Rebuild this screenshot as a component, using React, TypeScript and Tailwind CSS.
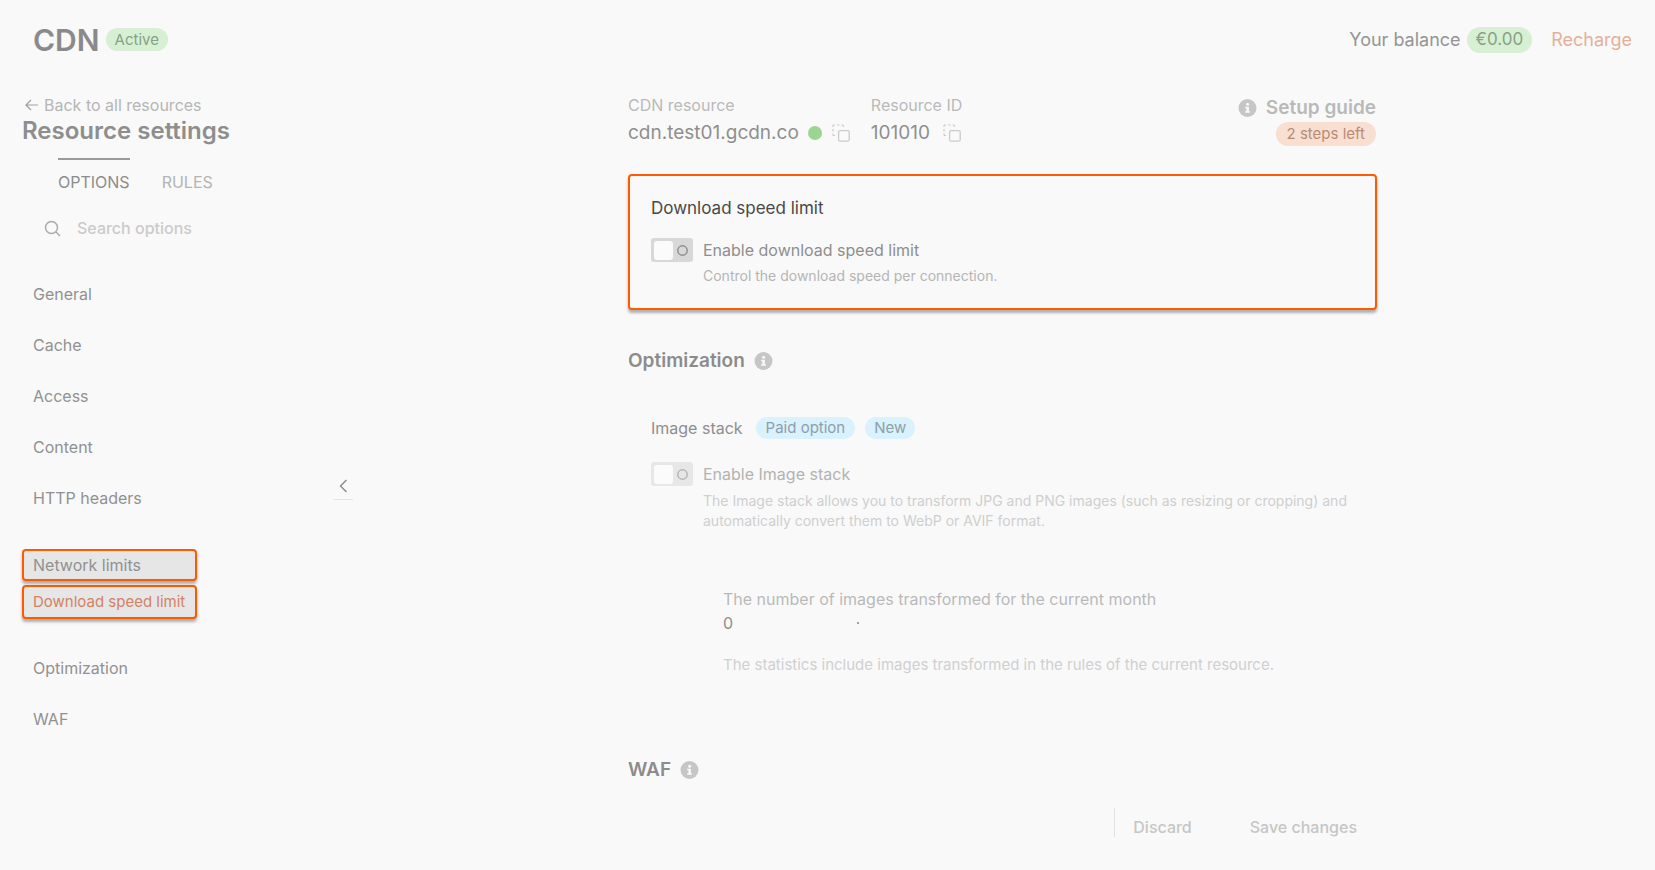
import { useState } from "react";

const topSections = ["General", "Cache", "Access", "Content", "HTTP headers"];
const bottomSections = ["Optimization", "WAF"];

function InfoIcon() {
	return (
		<svg width="19" height="19" viewBox="0 0 19 19" className="shrink-0" aria-hidden="true">
			<circle cx="9.5" cy="9" r="9" fill="#c6c6c6" />
			<circle cx="9.6" cy="5.2" r="1.5" fill="#f9f9f9" />
			<path d="M7.2 7.7h3.7v4.6h1v1.5H7.1v-1.5h1.3V9.2H7.2z" fill="#f9f9f9" />
		</svg>
	);
}

function CopyButton({ label }: { label: string }) {
	return (
		<button type="button" aria-label={label}>
			<svg width="18" height="18" viewBox="0 0 18 18" fill="none" stroke="#cbcbcb">
				<rect x="6.6" y="6.6" width="10.6" height="10.6" rx="1.5" strokeWidth="1.3" />
				<path
					d="M1 3V2a1 1 0 0 1 1-1h1M5 1h2.5M9.5 1h1a1 1 0 0 1 1 1v1M1 5v2.5M1 9.5v1a1 1 0 0 0 1 1h1"
					strokeWidth="1.2"
				/>
			</svg>
		</button>
	);
}

function Toggle({ id, disabled }: { id: string; disabled?: boolean }) {
	const [on, setOn] = useState(false);
	return (
		<span
			className={`relative flex h-6 w-[42px] shrink-0 items-center gap-1 rounded-[3px] px-[3px] ${
				disabled ? "bg-[#e7e7e7]" : "bg-[#d8d8d8]"
			} ${on ? "flex-row-reverse" : ""}`}>
			<input
				id={id}
				type="checkbox"
				role="switch"
				disabled={disabled}
				checked={on}
				onChange={() => setOn(!on)}
				className="absolute inset-0 m-0 h-full w-full opacity-0"
			/>
			<span className="h-[19px] w-[19px] shrink-0 rounded-[3px] bg-[#fbfbfb]" />
			<svg
				width="11"
				height="11"
				viewBox="0 0 11 11"
				fill="none"
				strokeWidth="1.5"
				className={disabled ? "stroke-[#b5b5b5]" : "stroke-[#8e8e8e]"}>
				<circle cx="5.5" cy="5.5" r="4.7" />
			</svg>
		</span>
	);
}

function NavLink({ name }: { name: string }) {
	return (
		<li className="flex h-[51px] items-center pl-[11px]">
			<a href="#">{name}</a>
		</li>
	);
}

function Sidebar() {
	return (
		<aside className="flex w-[350px] shrink-0 items-start justify-between pt-[15px] pl-[22px]">
			<div>
				<a href="#" className="flex items-center gap-[6px] pl-[2px] text-[16px] leading-6 text-[#b5b5b5]">
					<svg width="14" height="14" viewBox="0 0 14 14" fill="none" stroke="#a0a0a0" strokeWidth="1.2">
						<path d="M14 7H2M7 2L2 7l5 5" />
					</svg>
					Back to all resources
				</a>
				<h2 className="text-[24px] leading-7 font-semibold text-[#8e8e8e]">Resource settings</h2>
				<div role="tablist" className="mt-[13px] flex gap-8 pl-9 text-[16px] leading-6">
					<button role="tab" aria-selected="true" className="border-t-2 border-[#9a9a9a] pt-[10px] text-[#8c8c8c]">
						OPTIONS
					</button>
					<button role="tab" aria-selected="false" className="border-t-2 border-transparent pt-[10px] text-[#b4b4b4]">
						RULES
					</button>
				</div>
				<label className="mt-[14px] flex h-10 items-center gap-4 pl-[22px]">
					<svg width="17" height="17" viewBox="0 0 17 17" fill="none" stroke="#a9a9a9" strokeWidth="1.5">
						<circle cx="7.5" cy="7.5" r="6" />
						<path d="M12 12l4 4" />
					</svg>
					<input
						type="text"
						aria-label="Search options"
						placeholder="Search options"
						className="w-[180px] text-[16px] font-medium outline-none placeholder:text-[#cbcbcb]"
					/>
				</label>
				<nav className="mt-5 text-[16px] text-[#919191]">
					<ul>
						{topSections.map((name) => (
							<NavLink key={name} name={name} />
						))}
					</ul>
					<div className="mt-[26px] mb-[23px] flex w-[175px] flex-col gap-1">
						<a
							href="#"
							className="flex h-8 items-center rounded-[4px] border-2 border-[#ff5a00] bg-[#e6e6e6] pl-[9px] shadow-[0_3px_3px_rgba(0,0,0,0.3)]">
							Network limits
						</a>
						<a
							href="#"
							className="flex h-[34px] items-center rounded-[4px] border-2 border-[#ff5a00] bg-[#e6e6e6] pl-[9px] text-[15px] text-[#d28264] shadow-[0_3px_3px_rgba(0,0,0,0.3)]">
							Download speed limit
						</a>
					</div>
					<ul>
						{bottomSections.map((name) => (
							<NavLink key={name} name={name} />
						))}
					</ul>
				</nav>
			</div>
			<button
				type="button"
				aria-label="Collapse sidebar"
				className="mt-[379px] -mr-[3px] flex h-7 w-[19px] items-center justify-center border-b border-[#e4e4e4]">
				<svg width="9" height="14" viewBox="0 0 9 14" fill="none" stroke="#858585" strokeWidth="1.3">
					<path d="M7.5 1L1.5 7l6 6" />
				</svg>
			</button>
		</aside>
	);
}

function Content() {
	return (
		<main className="min-w-0 flex-1">
			<div className="mx-auto max-w-[749px] pt-[15px]">
				<div className="flex justify-between">
					<div className="flex gap-[21px]">
						<div>
							<p className="text-[16px] leading-6 text-[#b9b9b9]">CDN resource</p>
							<div className="mt-[2px] flex items-center text-[19px] leading-7 text-[#8f8f8f]">
								cdn.test01.gcdn.co
								<span className="mr-[10px] ml-[9px] h-[14px] w-[14px] rounded-full bg-[#9bd690]" />
								<CopyButton label="Copy CDN resource" />
							</div>
						</div>
						<div>
							<p className="text-[16px] leading-6 text-[#b9b9b9]">Resource ID</p>
							<div className="mt-[2px] flex items-center gap-[13px] text-[19px] leading-7 text-[#8f8f8f]">
								101010
								<CopyButton label="Copy resource ID" />
							</div>
						</div>
					</div>
					<div className="flex flex-col items-end pt-px pr-px">
						<a href="#" className="flex items-center gap-[9px] text-[19px] leading-7 font-semibold text-[#b9b9b9]">
							<InfoIcon />
							Setup guide
						</a>
						<span className="flex h-6 items-center rounded-full bg-[#f8dfd1] px-[11px] pt-px text-[15px] text-[#b88b78]">
							2 steps left
						</span>
					</div>
				</div>

				<section className="mt-[27px] rounded-[4px] border-2 border-[#ff5a00] bg-[#f9f9f9] px-[21px] pt-5 pb-[22px] shadow-[0_3px_3px_rgba(0,0,0,0.3)]">
					<h3 className="text-[17px] leading-6 text-[#484848]">Download speed limit</h3>
					<div className="mt-[18px] flex items-center gap-[10px]">
						<Toggle id="speed-limit" />
						<label htmlFor="speed-limit" className="text-[16px] leading-6 text-[#8e8e8e]">
							Enable download speed limit
						</label>
					</div>
					<p className="mt-1 pl-[52px] text-[14px] leading-5 text-[#b5b5b5]">
						Control the download speed per connection.
					</p>
				</section>

				<h2 className="mt-[37px] flex items-center gap-[9px] text-[19px] leading-7 font-semibold text-[#8c8c8c]">
					Optimization
					<InfoIcon />
				</h2>
				<section className="mt-[41px] px-[23px]">
					<div className="flex items-center gap-[10px]">
						<h3 className="mr-[3px] text-[16px] leading-6 text-[#8e8e8e]">Image stack</h3>
						<span className="flex h-[22px] items-center rounded-full bg-[#d9f2fd] px-[10px] pt-px text-[15px] text-[#8ba0aa]">
							Paid option
						</span>
						<span className="flex h-[22px] items-center rounded-full bg-[#d9f2fd] px-[9px] pt-px text-[15px] text-[#8ba0aa]">
							New
						</span>
					</div>
					<div className="mt-[22px] flex items-center gap-[10px]">
						<Toggle id="image-stack" disabled />
						<label htmlFor="image-stack" className="text-[16px] leading-6 text-[#b3b3b3]">
							Enable Image stack
						</label>
					</div>
					<p className="mt-[5px] pl-[52px] text-[14px] leading-5 text-[#cfcfcf]">
						The Image stack allows you to transform JPG and PNG images (such as resizing or cropping) and
						automatically convert them to WebP or AVIF format.
					</p>
					<div className="mt-14 pl-[72px]">
						<p className="text-[16px] leading-6 text-[#b9b9b9]">
							The number of images transformed for the current month
						</p>
						<div className="flex items-center gap-[124px] text-[16px] leading-6 text-[#8e8e8e]">
							0
							<span className="h-[2px] w-[2px] bg-[#a0a0a0]" />
						</div>
						<p className="mt-5 text-[15px] leading-5 text-[#d0d0d0]">
							The statistics include images transformed in the rules of the current resource.
						</p>
					</div>
				</section>

				<h2 className="mt-[81px] flex items-center gap-[9px] text-[19px] leading-7 font-semibold text-[#8c8c8c]">
					WAF
					<InfoIcon />
				</h2>
				<div className="mt-6 flex justify-end pr-5 text-[16px] leading-6 font-medium text-[#c6c6c6]">
					<div className="h-[29px] border-l border-[#e2e2e2] pt-[7px] pl-[18px]">
						<button type="button">Discard</button>
					</div>
					<button type="button" className="ml-[58px] pt-[7px]">
						Save changes
					</button>
				</div>
			</div>
		</main>
	);
}

export default function App() {
	return (
		<div className="min-h-screen bg-[#f9f9f9] font-['Inter',sans-serif]">
			<header className="flex h-[78px] items-center justify-between pt-px pr-[23px] pl-[33px]">
				<div className="flex items-center gap-[6px]">
					<h1 className="text-[30px] leading-9 font-semibold text-[#8a8a8a]">CDN</h1>
					<span className="flex h-[23px] items-center rounded-full bg-[#d7f0d3] px-[9px] pt-px text-[15px] text-[#88a186]">
						Active
					</span>
				</div>
				<div className="flex items-center text-[18px] text-[#959595]">
					Your balance
					<span className="ml-[6px] flex h-[26px] items-center rounded-full bg-[#d7f0d3] px-[9px] pt-px text-[17px] text-[#88a186]">
						€0.00
					</span>
					<a href="#" className="ml-[19px] text-[#e4b097]">
						Recharge
					</a>
				</div>
			</header>
			<div className="flex">
				<Sidebar />
				<Content />
			</div>
		</div>
	);
}
